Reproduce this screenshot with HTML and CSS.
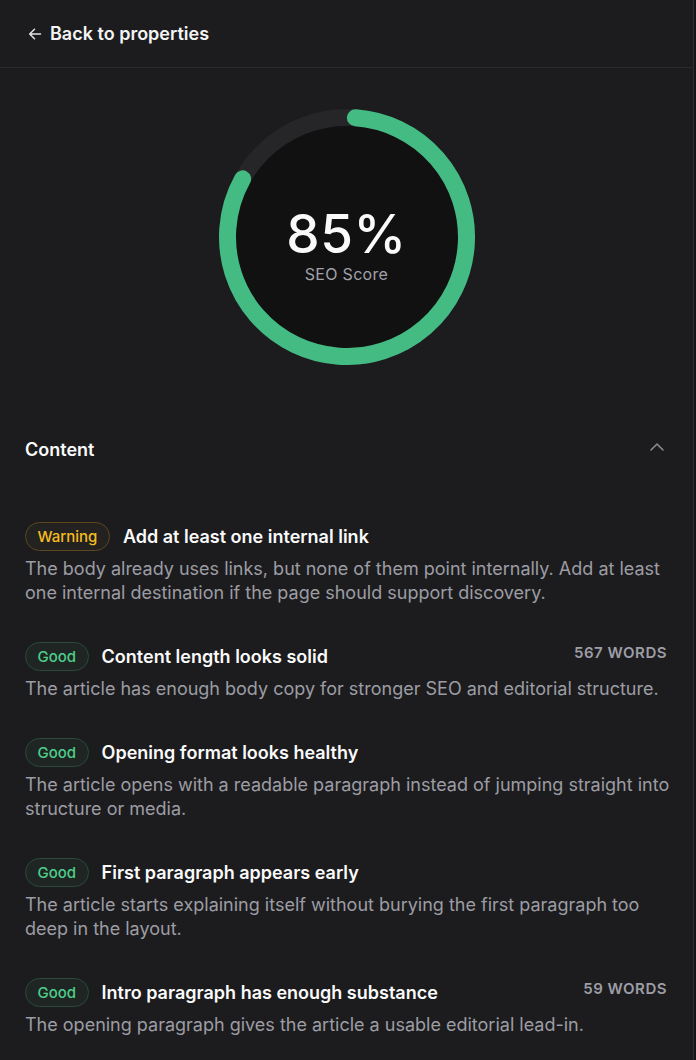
FILE: index.html
```html
<!DOCTYPE html>
<html lang="en">
<head>
<meta charset="utf-8">
<title>SEO Score</title>
<link rel="stylesheet" href="styles.css">
</head>
<body>
<div class="panel">
  <header class="topbar">
    <a class="back" href="#">
      <svg class="back-icon" width="14" height="14" viewBox="0 0 14 14" fill="none">
        <path d="M12.5 7H1.8M6.5 2.2L1.7 7l4.8 4.8" stroke="currentColor" stroke-width="1.5" stroke-linecap="round" stroke-linejoin="round"/>
      </svg>
      <span>Back to properties</span>
    </a>
  </header>

  <section class="score">
    <div class="ring">
      <svg width="256" height="256" viewBox="0 0 256 256">
        <circle cx="128" cy="128" r="119.5" fill="none" stroke="#262628" stroke-width="17"/>
        <circle cx="128" cy="128" r="111" fill="#111112"/>
        <circle class="ring-progress" cx="128" cy="128" r="119.5" fill="none" stroke="#43bb82" stroke-width="17" stroke-linecap="round" stroke-dasharray="615.3 1000"/>
      </svg>
      <div class="ring-label">
        <div class="ring-value">85%</div>
        <div class="ring-caption">SEO Score</div>
      </div>
    </div>
  </section>

  <section class="group">
    <div class="group-head">
      <h2>Content</h2>
      <svg class="chevron" width="16" height="10" viewBox="0 0 16 10" fill="none">
        <path d="M2 8L8 2l6 6" stroke="currentColor" stroke-width="1.5" stroke-linecap="round" stroke-linejoin="round"/>
      </svg>
    </div>

    <ul class="checks">
      <li class="check">
        <div class="check-head">
          <span class="badge badge-warn">Warning</span>
          <span class="check-title">Add at least one internal link</span>
        </div>
        <p class="check-desc">The body already uses links, but none of them point internally. Add at least one internal destination if the page should support discovery.</p>
      </li>
      <li class="check">
        <div class="check-head">
          <span class="badge badge-good">Good</span>
          <span class="check-title">Content length looks solid</span>
          <span class="check-meta">567 words</span>
        </div>
        <p class="check-desc">The article has enough body copy for stronger SEO and editorial structure.</p>
      </li>
      <li class="check">
        <div class="check-head">
          <span class="badge badge-good">Good</span>
          <span class="check-title">Opening format looks healthy</span>
        </div>
        <p class="check-desc">The article opens with a readable paragraph instead of jumping straight into structure or media.</p>
      </li>
      <li class="check">
        <div class="check-head">
          <span class="badge badge-good">Good</span>
          <span class="check-title">First paragraph appears early</span>
        </div>
        <p class="check-desc">The article starts explaining itself without burying the first paragraph too deep in the layout.</p>
      </li>
      <li class="check">
        <div class="check-head">
          <span class="badge badge-good">Good</span>
          <span class="check-title">Intro paragraph has enough substance</span>
          <span class="check-meta">59 words</span>
        </div>
        <p class="check-desc">The opening paragraph gives the article a usable editorial lead-in.</p>
      </li>
    </ul>
  </section>
</div>
</body>
</html>
```

FILE: styles.css
```css
* {
  box-sizing: border-box;
}

html, body {
  margin: 0;
  padding: 0;
  background: #141416;
}

body {
  font-family: Inter, "Noto Sans", sans-serif;
  color: #f4f4f5;
  -webkit-font-smoothing: antialiased;
}

.panel {
  width: 694px;
  min-height: 1060px;
  background: #1c1c1e;
  border-right: 1px solid #2e2e31;
}

/* top bar */
.topbar {
  height: 68px;
  display: flex;
  align-items: center;
  padding: 0 28px;
  border-bottom: 1px solid #2a2a2d;
}

.back {
  display: flex;
  align-items: center;
  gap: 8px;
  color: #f4f4f5;
  text-decoration: none;
  font-size: 18px;
  font-weight: 600;
}

.back-icon {
  color: #e4e4e7;
}

/* score ring */
.score {
  display: flex;
  justify-content: center;
  padding-top: 41px;
}

.ring {
  position: relative;
  width: 256px;
  height: 256px;
}

.ring svg {
  display: block;
}

.ring-progress {
  transform: rotate(-86deg);
  transform-origin: 128px 128px;
}

.ring-label {
  position: absolute;
  inset: 0;
  display: flex;
  flex-direction: column;
  align-items: center;
  justify-content: center;
  padding-top: 16px;
}

.ring-value {
  font-size: 53px;
  font-weight: 500;
  line-height: 54px;
  color: #fafafa;
  letter-spacing: 0.5px;
}

.ring-caption {
  margin-top: 4px;
  font-size: 16px;
  line-height: 18px;
  color: #a1a1aa;
  letter-spacing: 0.3px;
}

/* check group */
.group {
  padding: 64px 20px 0 25px;
}

.group-head {
  display: flex;
  align-items: center;
  justify-content: space-between;
  height: 40px;
}

.group-head h2 {
  margin: 0;
  font-size: 18px;
  font-weight: 600;
  color: #fafafa;
}

.chevron {
  color: #8e8e95;
  margin-right: 8px;
  margin-top: -4px;
}

.checks {
  list-style: none;
  margin: 0;
  padding: 0;
  margin-top: 53px;
  display: flex;
  flex-direction: column;
  gap: 37px;
}

.check-head {
  display: flex;
  align-items: center;
  gap: 13px;
}

.badge {
  display: inline-flex;
  align-items: center;
  height: 29px;
  padding: 0 11.5px;
  border-radius: 15px;
  font-size: 15px;
  font-weight: 500;
  border: 1px solid;
}

.badge-warn {
  color: #f6bd1f;
  background: #232220;
  border-color: #5c4820;
}

.badge-good {
  color: #4ccf89;
  background: #1f2522;
  border-color: #2b4a3a;
}

.check-title {
  font-size: 18px;
  font-weight: 600;
  color: #fafafa;
  flex: 1;
}

.check-meta {
  align-self: flex-start;
  margin-top: 1px;
  font-size: 15px;
  font-weight: 600;
  color: #9d9da5;
  text-transform: uppercase;
  letter-spacing: 0.5px;
  padding-right: 6px;
}

.check-desc {
  margin: 6px 0 0 0;
  font-size: 18px;
  line-height: 24px;
  color: #9c9ca4;
}
```
